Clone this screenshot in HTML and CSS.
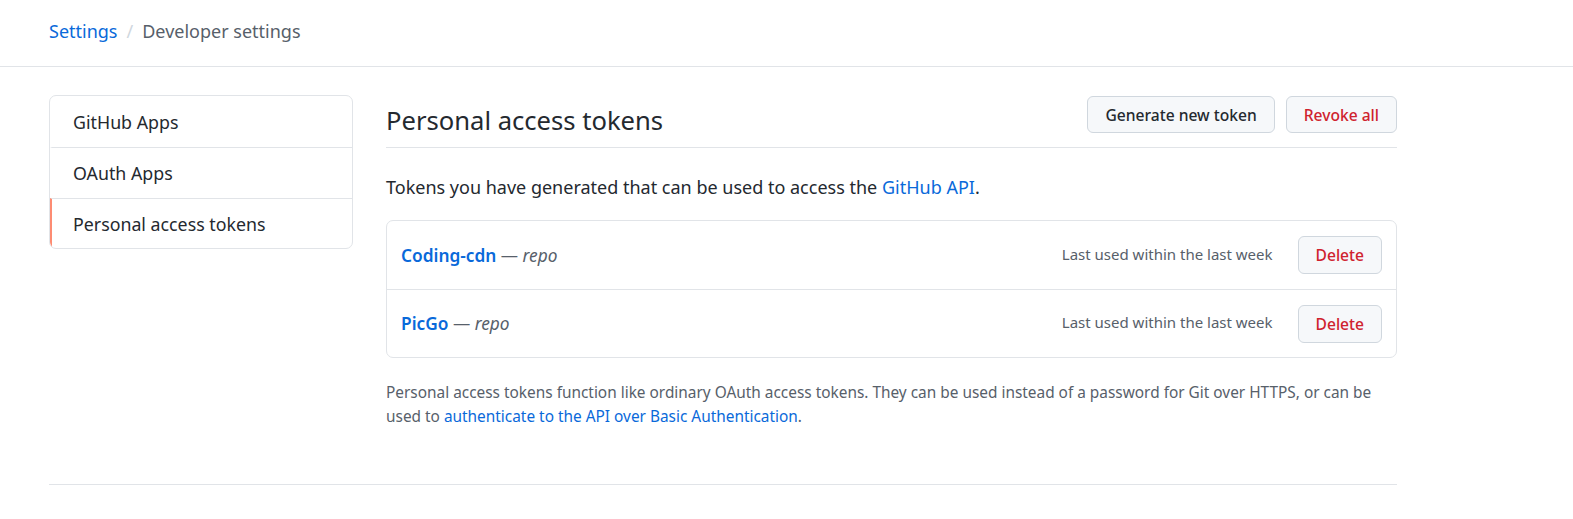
FILE: index.html
```html
<!DOCTYPE html>
<html>
<head>
<meta charset="utf-8">
<link rel="stylesheet" href="styles.css">
</head>
<body>
<header class="topbar">
  <nav class="crumbs">
    <a href="#" class="crumb-link">Settings</a>
    <span class="crumb-sep">/</span>
    <span class="crumb-current">Developer settings</span>
  </nav>
</header>
<div class="layout">
  <aside class="sidebar">
    <a href="#" class="menu-item">GitHub Apps</a>
    <a href="#" class="menu-item">OAuth Apps</a>
    <a href="#" class="menu-item selected">Personal access tokens</a>
  </aside>
  <main class="main">
    <div class="subhead">
      <h2 class="subhead-title">Personal access tokens</h2>
      <div class="subhead-actions">
        <button class="btn">Generate new token</button>
        <button class="btn danger">Revoke all</button>
      </div>
    </div>
    <p class="intro">Tokens you have generated that can be used to access the <a href="#" class="link">GitHub API</a>.</p>
    <div class="box">
      <div class="token-row">
        <div class="token-name"><a href="#" class="token-link">Coding-cdn</a> — <em class="scope">repo</em></div>
        <span class="last-used">Last used within the last week</span>
        <button class="btn danger small">Delete</button>
      </div>
      <div class="token-row">
        <div class="token-name"><a href="#" class="token-link">PicGo</a> — <em class="scope">repo</em></div>
        <span class="last-used">Last used within the last week</span>
        <button class="btn danger small">Delete</button>
      </div>
    </div>
    <p class="note">Personal access tokens function like ordinary OAuth access tokens. They can be used instead of a password for Git over HTTPS, or can be used to <a href="#" class="link">authenticate to the API over Basic Authentication</a>.</p>
  </main>
</div>
<div class="footer-wrap"><div class="footer-line"></div></div>
</body>
</html>
```
FILE: styles.css
```css
* { box-sizing: border-box; }
html, body { margin: 0; padding: 0; background: #fff; }
body {
  font-family: "Noto Sans", "Open Sans", sans-serif;
  color: #24292f;
  font-size: 16px;
}
a { text-decoration: none; }
.topbar {
  height: 67px;
  border-bottom: 1px solid #e1e4e8;
  display: flex;
  align-items: center;
  padding: 0 49px;
}
.crumbs { font-size: 18px; display: flex; gap: 9px; align-items: center; margin-top: -4px; }
.crumb-link { color: #0969da; }
.crumb-sep { color: #d0d7de; }
.crumb-current { color: #57606a; }
.layout {
  display: flex;
  gap: 33px;
  padding: 28px 49px 0;
  width: 1446px;
}
.sidebar {
  width: 304px;
  flex: none;
  border: 1px solid #e1e4e8;
  border-radius: 7px;
  display: flex;
  flex-direction: column;
  align-self: flex-start;
  overflow: hidden;
}
.menu-item {
  height: 51px;
  display: flex;
  align-items: center;
  padding-left: 21px;
  color: #24292f;
  font-size: 17.8px;
  border-top: 1px solid #e1e4e8;
  border-left: 2px solid transparent;
}
.menu-item:first-child { border-top: 0; height: 51px; }
.menu-item.selected { border-left-color: #fd8c73; height: 50px; }
.main { flex: 1; min-width: 0; }
.subhead {
  display: flex;
  align-items: center;
  justify-content: space-between;
  border-bottom: 1px solid #e1e4e8;
  height: 52px;
  padding-bottom: 14px;
  margin-top: 1px;
}
.subhead-title { margin: 0; font-size: 25.6px; font-weight: 400; color: #24292f; margin-top: 12px; line-height: 34px; }
.subhead-actions { display: flex; gap: 11px; }
.btn {
  font-family: inherit;
  font-size: 15.6px;
  height: 37px;
  padding: 0 17px;
  background: #f6f8fa;
  border: 1px solid #d0d7de;
  border-radius: 6px;
  color: #24292f;
  font-weight: 500;
}
.btn.danger { color: #cf222e; }
.btn.small { height: 38px; padding: 0 17px; }
.intro { margin: 27px 0 0; font-size: 18px; line-height: 24px; color: #24292f; }
.link { color: #0969da; }
.box {
  margin-top: 21px;
  border: 1px solid #e1e4e8;
  border-radius: 7px;
}
.token-row {
  display: flex;
  align-items: center;
  height: 68px;
  padding: 0 14px 0 14px;
  border-top: 1px solid #e1e4e8;
}
.token-row:first-child { border-top: 0; }
.token-name { flex: 1; color: #57606a; font-size: 17.3px; }
.token-link { color: #0969da; font-weight: 600; }
.scope { color: #57606a; }
.last-used { font-size: 15px; color: #57606a; margin-right: 25px; margin-top: -3px; }
.note {
  margin: 23px 0 0;
  font-size: 15.4px;
  line-height: 24px;
  color: #57606a;
}
.footer-wrap { padding: 55px 49px 0; width: 1446px; }
.footer-line { border-top: 1px solid #e1e4e8; width: 1348px; }
```
